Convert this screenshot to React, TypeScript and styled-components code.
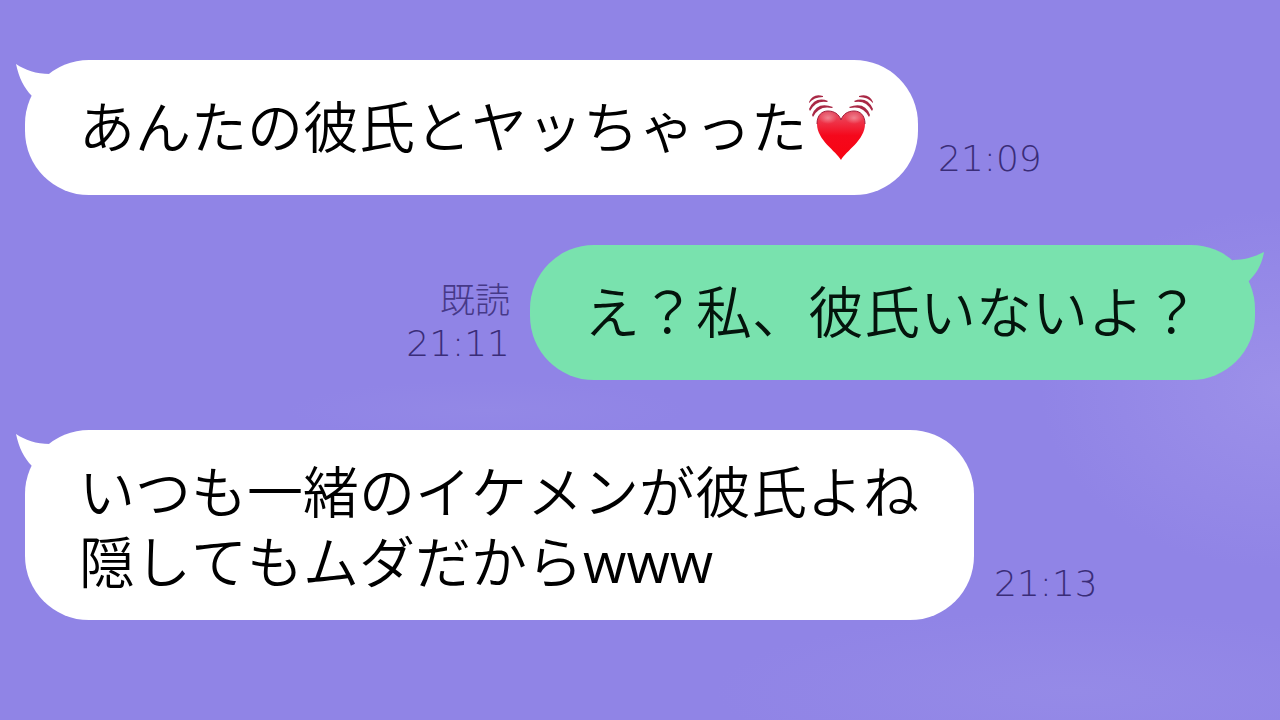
import React from "react";
import styled, { createGlobalStyle } from "styled-components";

type Side = "left" | "right";

const GlobalStyle = createGlobalStyle`
  *, *::before, *::after { box-sizing: border-box; }
  body {
    margin: 0;
    background: #9084e6;
  }
`;

const Chat = styled.main`
  min-height: 100vh;
  padding: 60px 25px 50px;
  display: flex;
  flex-direction: column;
  gap: 50px;
  overflow: hidden;
  font-family: "Noto Sans CJK JP", sans-serif;
  font-kerning: none;
  background:
    radial-gradient(ellipse 360px 80px at 84% 96%, #958ae7 0%, #958ae700 100%),
    radial-gradient(ellipse 240px 180px at 100% 54%, #9c90e9 0%, #9c90e900 100%),
    radial-gradient(ellipse 200px 30px at 38% 57%, #9388e6 0%, #9388e600 100%),
    #9084e6;
`;

const Message = styled.article<{ $side: Side }>`
  display: flex;
  flex-direction: ${({ $side }) => ($side === "left" ? "row" : "row-reverse")};
  align-items: flex-end;
  gap: 20px;
`;

const Bubble = styled.div<{ $side: Side; $multiline?: boolean }>`
  position: relative;
  display: flex;
  align-items: center;
  padding: ${({ $multiline }) => ($multiline ? "24px 55px 26px 54px" : "29px 55px 36px 54px")};
  border-radius: 64px;
  color: ${({ $side }) => ($side === "left" ? "#000" : "#04140c")};
  background: ${({ $side }) => ($side === "left" ? "#fff" : "#79e2ae")};
`;

const Tail = styled.svg<{ $side: Side }>`
  position: absolute;
  top: 0;
  ${({ $side }) => $side}: -9px;
  width: 50px;
  height: 50px;
  fill: ${({ $side }) => ($side === "left" ? "#fff" : "#79e2ae")};
`;

const Text = styled.p`
  margin: 0;
  font-size: 56px;
  font-weight: 350;
  line-height: 70px;
  white-space: pre-line;
`;

const Latin = styled.span`
  font-family: "Open Sans", sans-serif;
  font-weight: 400;
  line-height: 1;
`;

const Heart = styled.svg`
  width: 68px;
  height: 68px;
  margin-right: -12px;
  flex: none;
  overflow: visible;
`;

const Meta = styled.footer<{ $side: Side }>`
  display: flex;
  flex-direction: column;
  align-items: ${({ $side }) => ($side === "left" ? "flex-start" : "flex-end")};
  gap: 2px;
  padding-bottom: 14px;
  color: #3a2d78;
`;

const Read = styled.span`
  font-size: 35px;
  font-weight: 300;
  line-height: 44px;
  opacity: 0.85;
`;

const Time = styled.time`
  font-family: "DejaVu Sans", "DejaVu Sans Light", sans-serif;
  font-size: 36px;
  font-weight: 200;
  line-height: 44px;
`;

function BubbleTail({ side }: { side: Side }) {
  return (
    <Tail $side={side} viewBox="0 0 50 50" aria-hidden="true">
      {side === "left" ? (
        <path d="M0 4C9 10 20 14 34 14L46 30L26 50L16 36C8 28 3 18 0 4Z" />
      ) : (
        <path d="M50 7C42 11 32 15 19 15L4 30L24 50L34 37C42 29 48 20 50 7Z" />
      )}
    </Tail>
  );
}

function BeatingHeart() {
  return (
    <Heart viewBox="0 -3 68 68" role="img" aria-label="beating heart">
      <defs>
        <linearGradient id="heartFill" x1="0" y1="0" x2="0" y2="1">
          <stop offset="0" stopColor="#e2566a" />
          <stop offset="0.22" stopColor="#ee3348" />
          <stop offset="0.5" stopColor="#f5081c" />
          <stop offset="1" stopColor="#f80412" />
        </linearGradient>
        <radialGradient id="heartShine">
          <stop offset="0" stopColor="#fff" stopOpacity="0.35" />
          <stop offset="1" stopColor="#fff" stopOpacity="0" />
        </radialGradient>
      </defs>
      <path
        d="M34 67C29 58 10 47 10 31C10 22 15 18 21 18C27 18 32 21 34 27C36 21 41 18 47 18C53 18 58 22 58 31C58 47 39 58 34 67Z"
        fill="url(#heartFill)"
      />
      <path
        d="M10 31C10 22 15 18 21 18C27 18 32 21 34 27C36 21 41 18 47 18C53 18 58 22 58 31"
        fill="none"
        stroke="#a41c3a"
        strokeWidth="1"
      />
      <ellipse cx="21" cy="25" rx="9" ry="6" fill="url(#heartShine)" />
      <ellipse cx="47" cy="25" rx="9" ry="6" fill="url(#heartShine)" />
      <g fill="#a92845">
        <path d="M2 9Q6 0 16 3L16 4Q7 4 2 10Z" />
        <path d="M2 16Q8 3 21 8L20 9Q9 7 3 18Z" />
        <path d="M5 22Q10 8 26 14L25 15Q12 12 6 24Z" />
        <path d="M66 9Q62 0 52 3L52 4Q61 4 66 10Z" />
        <path d="M66 16Q60 3 47 8L48 9Q59 7 65 18Z" />
        <path d="M63 22Q58 8 42 14L43 15Q56 12 62 24Z" />
      </g>
    </Heart>
  );
}

export default function App() {
  return (
    <>
      <GlobalStyle />
      <Chat lang="ja">
        <Message $side="left">
          <Bubble $side="left">
            <BubbleTail side="left" />
            <Text>あんたの彼氏とヤッちゃった</Text>
            <BeatingHeart />
          </Bubble>
          <Meta $side="left">
            <Time>21:09</Time>
          </Meta>
        </Message>

        <Message $side="right">
          <Bubble $side="right">
            <BubbleTail side="right" />
            <Text>え？私、彼氏いないよ？</Text>
          </Bubble>
          <Meta $side="right">
            <Read>既読</Read>
            <Time>21:11</Time>
          </Meta>
        </Message>

        <Message $side="left">
          <Bubble $side="left" $multiline>
            <BubbleTail side="left" />
            <Text>
              いつも一緒のイケメンが彼氏よね{"\n"}隠してもムダだから<Latin>www</Latin>
            </Text>
          </Bubble>
          <Meta $side="left">
            <Time>21:13</Time>
          </Meta>
        </Message>
      </Chat>
    </>
  );
}
